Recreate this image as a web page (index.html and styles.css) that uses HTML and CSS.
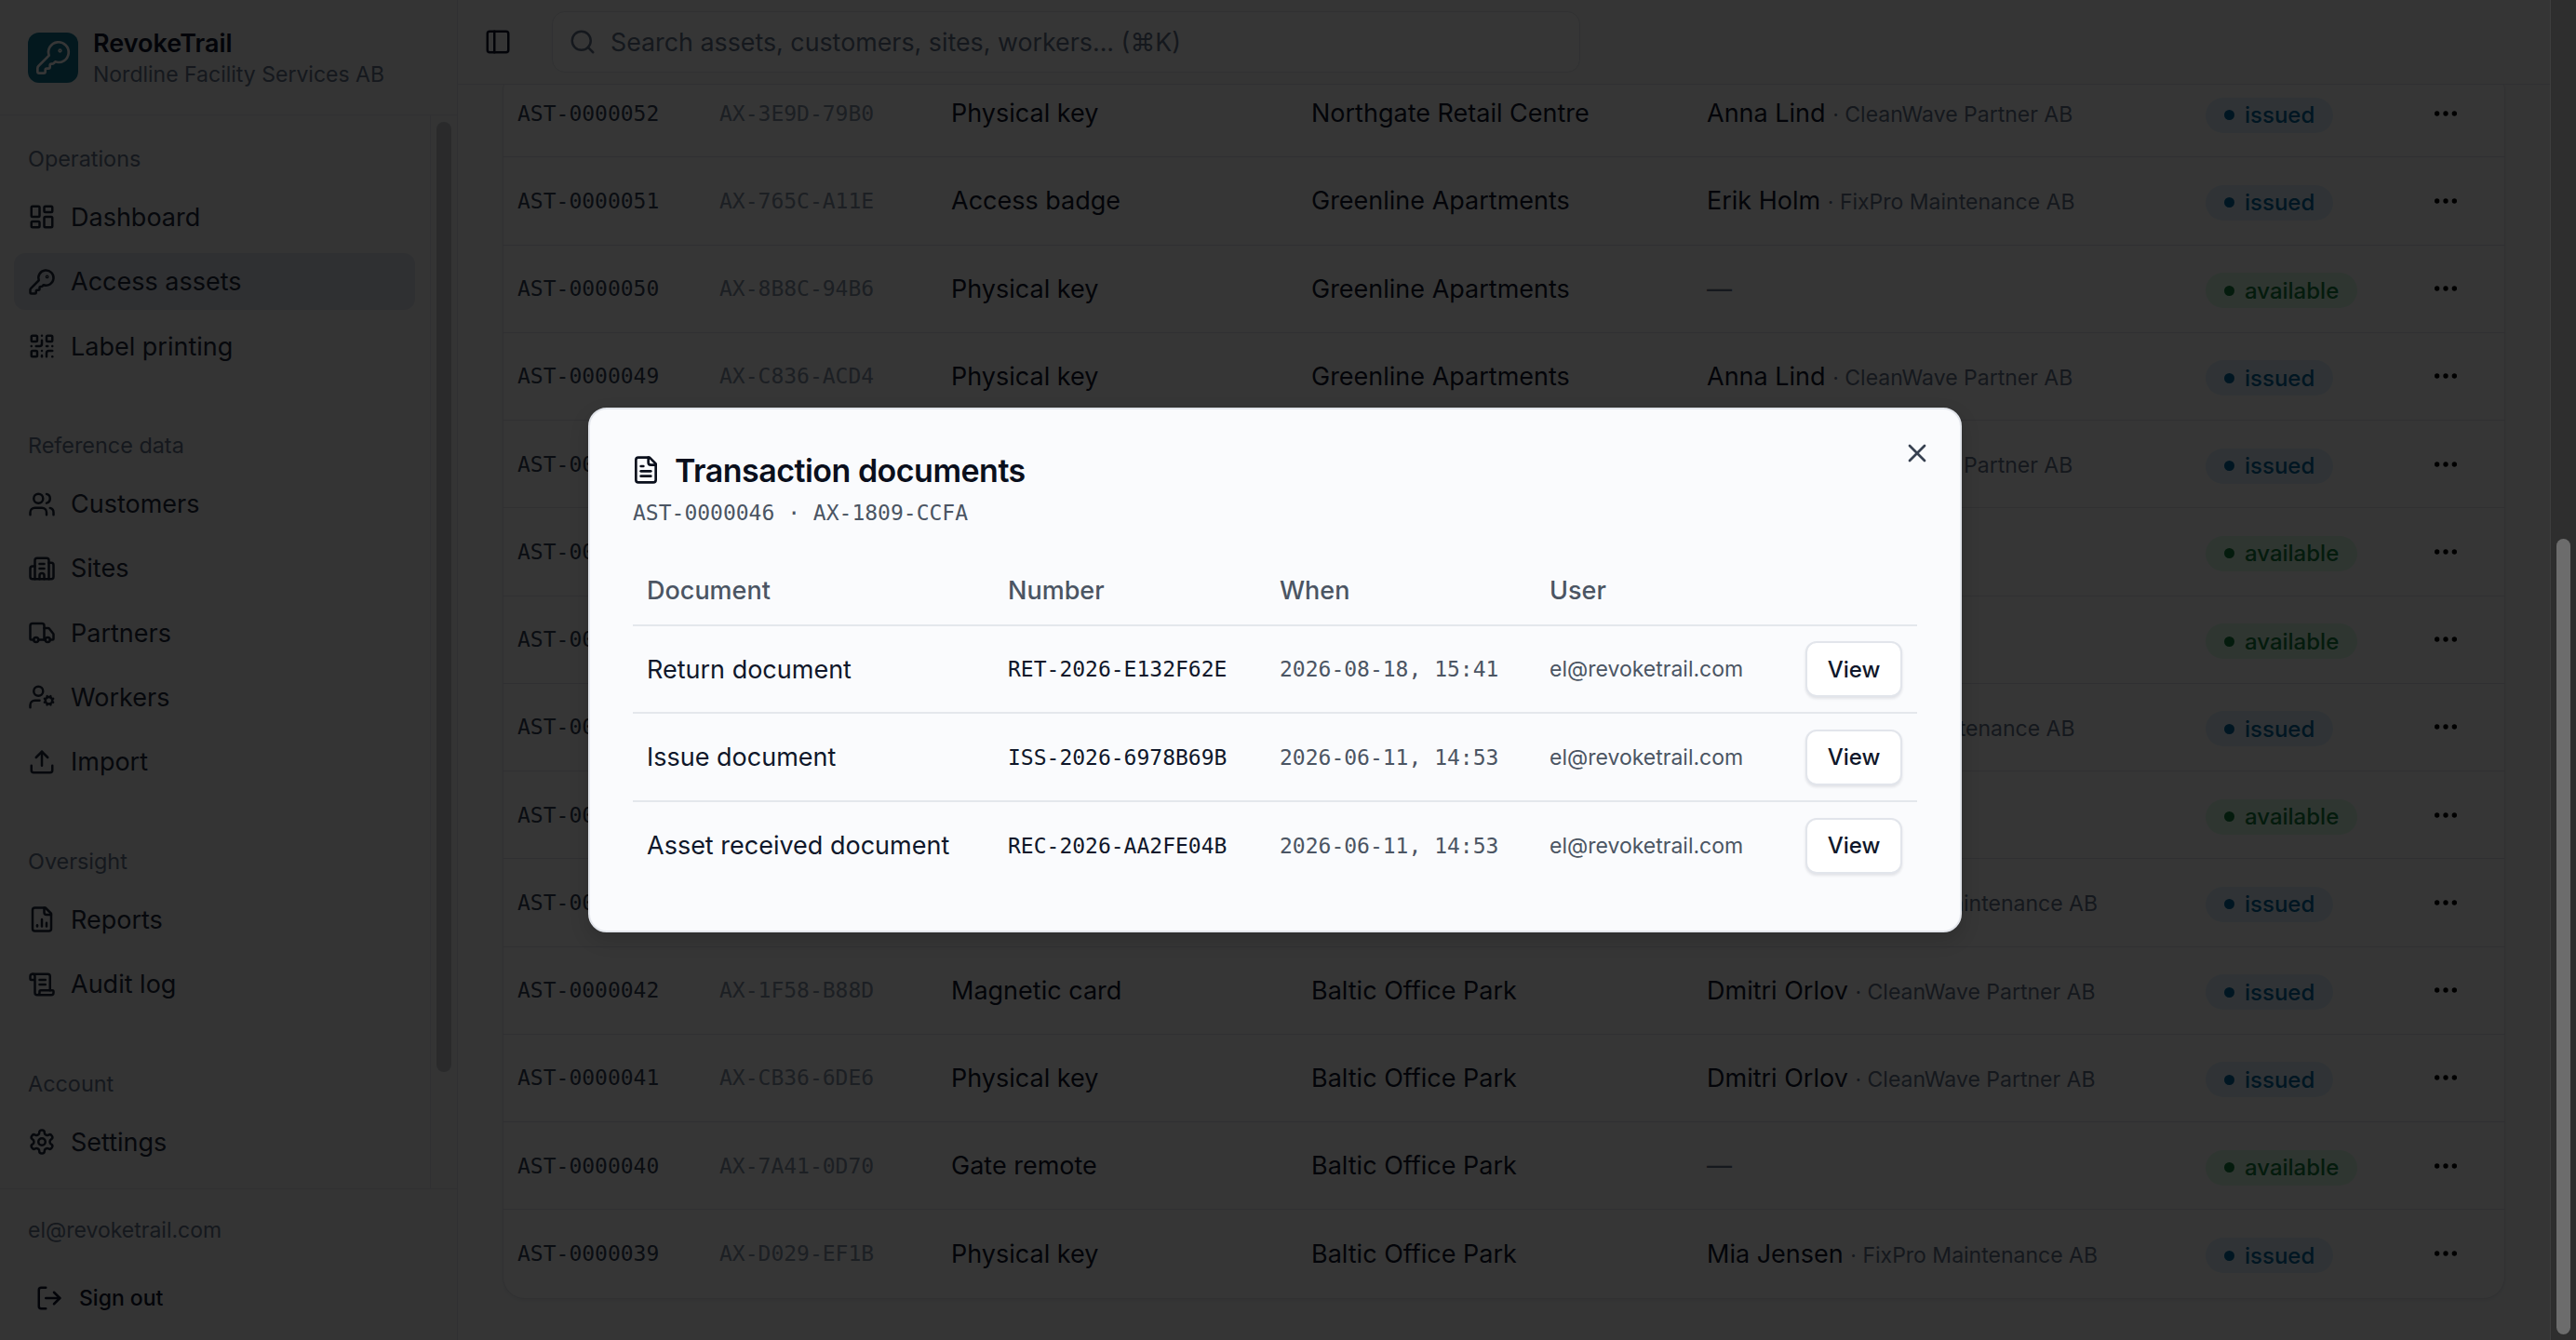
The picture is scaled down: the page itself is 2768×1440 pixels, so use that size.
FILE: index.html
```html
<!DOCTYPE html>
<html lang="en">
<head>
    <meta charset="UTF-8">
    <meta name="viewport" content="width=device-width, initial-scale=1.0">
    <title>RevokeTrail - Access assets</title>
    <link rel="stylesheet" href="styles.css">
</head>
<body>
    <!-- lucide style icons, used through <use> below -->
    <svg class="icon-defs" aria-hidden="true">
        <symbol id="i-key" viewBox="0 0 24 24"><path d="M2.586 17.414A2 2 0 0 0 2 18.828V21a1 1 0 0 0 1 1h3a1 1 0 0 0 1-1v-1a1 1 0 0 1 1-1h1a1 1 0 0 0 1-1v-1a1 1 0 0 1 1-1h.172a2 2 0 0 0 1.414-.586l.814-.814a6.5 6.5 0 1 0-4-4z"/><circle cx="16.5" cy="7.5" r=".5"/></symbol>
        <symbol id="i-dashboard" viewBox="0 0 24 24"><rect width="7" height="9" x="3" y="3" rx="1"/><rect width="7" height="5" x="14" y="3" rx="1"/><rect width="7" height="9" x="14" y="12" rx="1"/><rect width="7" height="5" x="3" y="16" rx="1"/></symbol>
        <symbol id="i-qr" viewBox="0 0 24 24"><rect width="5" height="5" x="3" y="3" rx="1"/><rect width="5" height="5" x="16" y="3" rx="1"/><rect width="5" height="5" x="3" y="16" rx="1"/><path d="M21 16h-3a2 2 0 0 0-2 2v3"/><path d="M21 21v.01"/><path d="M12 7v3a2 2 0 0 1-2 2H7"/><path d="M3 12h.01"/><path d="M12 3h.01"/><path d="M12 16v.01"/><path d="M16 12h1"/><path d="M21 12v.01"/><path d="M12 21v-1"/></symbol>
        <symbol id="i-users" viewBox="0 0 24 24"><path d="M16 21v-2a4 4 0 0 0-4-4H6a4 4 0 0 0-4 4v2"/><circle cx="9" cy="7" r="4"/><path d="M22 21v-2a4 4 0 0 0-3-3.87"/><path d="M16 3.13a4 4 0 0 1 0 7.75"/></symbol>
        <symbol id="i-building" viewBox="0 0 24 24"><path d="M10 12h4"/><path d="M10 8h4"/><path d="M14 21v-3a2 2 0 0 0-4 0v3"/><path d="M6 10H4a2 2 0 0 0-2 2v7a2 2 0 0 0 2 2h16a2 2 0 0 0 2-2V9a2 2 0 0 0-2-2h-2"/><path d="M6 21V5a2 2 0 0 1 2-2h8a2 2 0 0 1 2 2v16"/></symbol>
        <symbol id="i-truck" viewBox="0 0 24 24"><path d="M14 18V6a2 2 0 0 0-2-2H4a2 2 0 0 0-2 2v11a1 1 0 0 0 1 1h2"/><path d="M15 18H9"/><path d="M19 18h2a1 1 0 0 0 1-1v-3.65a1 1 0 0 0-.22-.624l-3.48-4.35A1 1 0 0 0 17.52 8H14"/><circle cx="17" cy="18" r="2"/><circle cx="7" cy="18" r="2"/></symbol>
        <symbol id="i-user-cog" viewBox="0 0 24 24"><path d="M10 15H6a4 4 0 0 0-4 4v2"/><path d="m14.305 16.53.923-.382"/><path d="m15.228 13.852-.923-.383"/><path d="m16.852 12.228-.383-.924"/><path d="m16.852 17.772-.383.924"/><path d="m19.148 12.228.383-.924"/><path d="m19.53 18.696-.382-.924"/><path d="m20.772 13.852.924-.383"/><path d="m20.772 16.148.924.383"/><circle cx="18" cy="15" r="3"/><circle cx="9" cy="7" r="4"/></symbol>
        <symbol id="i-upload" viewBox="0 0 24 24"><path d="M21 15v4a2 2 0 0 1-2 2H5a2 2 0 0 1-2-2v-4"/><polyline points="17 8 12 3 7 8"/><line x1="12" x2="12" y1="3" y2="15"/></symbol>
        <symbol id="i-report" viewBox="0 0 24 24"><path d="M15 2H6a2 2 0 0 0-2 2v16a2 2 0 0 0 2 2h12a2 2 0 0 0 2-2V7Z"/><path d="M14 2v4a2 2 0 0 0 2 2h4"/><path d="M8 18v-1"/><path d="M12 18v-6"/><path d="M16 18v-3"/></symbol>
        <symbol id="i-scroll" viewBox="0 0 24 24"><path d="M15 12h-5"/><path d="M15 8h-5"/><path d="M19 17V5a2 2 0 0 0-2-2H4"/><path d="M8 21h12a2 2 0 0 0 2-2v-1a1 1 0 0 0-1-1H11a1 1 0 0 0-1 1v1a2 2 0 1 1-4 0V5a2 2 0 1 0-4 0v2a1 1 0 0 0 1 1h3"/></symbol>
        <symbol id="i-settings" viewBox="0 0 24 24"><path d="M12.22 2h-.44a2 2 0 0 0-2 2v.18a2 2 0 0 1-1 1.73l-.43.25a2 2 0 0 1-2 0l-.15-.08a2 2 0 0 0-2.73.73l-.22.38a2 2 0 0 0 .73 2.73l.15.1a2 2 0 0 1 1 1.72v.51a2 2 0 0 1-1 1.74l-.15.09a2 2 0 0 0-.73 2.73l.22.38a2 2 0 0 0 2.73.73l.15-.08a2 2 0 0 1 2 0l.43.25a2 2 0 0 1 1 1.73V20a2 2 0 0 0 2 2h.44a2 2 0 0 0 2-2v-.18a2 2 0 0 1 1-1.73l.43-.25a2 2 0 0 1 2 0l.15.08a2 2 0 0 0 2.73-.73l.22-.39a2 2 0 0 0-.73-2.73l-.15-.08a2 2 0 0 1-1-1.74v-.5a2 2 0 0 1 1-1.74l.15-.09a2 2 0 0 0 .73-2.73l-.22-.38a2 2 0 0 0-2.73-.73l-.15.08a2 2 0 0 1-2 0l-.43-.25a2 2 0 0 1-1-1.73V4a2 2 0 0 0-2-2z"/><circle cx="12" cy="12" r="3"/></symbol>
        <symbol id="i-logout" viewBox="0 0 24 24"><path d="M9 21H5a2 2 0 0 1-2-2V5a2 2 0 0 1 2-2h4"/><polyline points="16 17 21 12 16 7"/><line x1="21" x2="9" y1="12" y2="12"/></symbol>
        <symbol id="i-panel" viewBox="0 0 24 24"><rect width="18" height="18" x="3" y="3" rx="2"/><path d="M9 3v18"/></symbol>
        <symbol id="i-search" viewBox="0 0 24 24"><circle cx="11" cy="11" r="8"/><path d="m21 21-4.3-4.3"/></symbol>
        <symbol id="i-dots" viewBox="0 0 24 24"><circle cx="12" cy="12" r="1"/><circle cx="19" cy="12" r="1"/><circle cx="5" cy="12" r="1"/></symbol>
        <symbol id="i-file" viewBox="0 0 24 24"><path d="M15 2H6a2 2 0 0 0-2 2v16a2 2 0 0 0 2 2h12a2 2 0 0 0 2-2V7Z"/><path d="M14 2v4a2 2 0 0 0 2 2h4"/><path d="M10 9H8"/><path d="M16 13H8"/><path d="M16 17H8"/></symbol>
        <symbol id="i-x" viewBox="0 0 24 24"><path d="M18 6 6 18"/><path d="m6 6 12 12"/></symbol>
    </svg>

    <div class="app">
        <aside class="sidebar">
            <div class="brand">
                <div class="brand-logo"><svg class="icon"><use href="#i-key"/></svg></div>
                <div class="brand-text">
                    <div class="brand-name">RevokeTrail</div>
                    <div class="brand-org">Nordline Facility Services AB</div>
                </div>
            </div>

            <div class="side-scroll">
                <nav class="nav">
                    <div class="nav-section">
                        <div class="nav-label">Operations</div>
                        <a class="nav-item"><svg class="icon"><use href="#i-dashboard"/></svg>Dashboard</a>
                        <a class="nav-item active"><svg class="icon"><use href="#i-key"/></svg>Access assets</a>
                        <a class="nav-item"><svg class="icon"><use href="#i-qr"/></svg>Label printing</a>
                    </div>
                    <div class="nav-section">
                        <div class="nav-label">Reference data</div>
                        <a class="nav-item"><svg class="icon"><use href="#i-users"/></svg>Customers</a>
                        <a class="nav-item"><svg class="icon"><use href="#i-building"/></svg>Sites</a>
                        <a class="nav-item"><svg class="icon"><use href="#i-truck"/></svg>Partners</a>
                        <a class="nav-item"><svg class="icon"><use href="#i-user-cog"/></svg>Workers</a>
                        <a class="nav-item"><svg class="icon"><use href="#i-upload"/></svg>Import</a>
                    </div>
                    <div class="nav-section">
                        <div class="nav-label">Oversight</div>
                        <a class="nav-item"><svg class="icon"><use href="#i-report"/></svg>Reports</a>
                        <a class="nav-item"><svg class="icon"><use href="#i-scroll"/></svg>Audit log</a>
                    </div>
                    <div class="nav-section">
                        <div class="nav-label">Account</div>
                        <a class="nav-item"><svg class="icon"><use href="#i-settings"/></svg>Settings</a>
                    </div>
                </nav>
                <div class="side-track"><div class="side-thumb"></div></div>
            </div>

            <div class="side-foot">
                <div class="side-email">el@revoketrail.com</div>
                <a class="sign-out"><svg class="icon"><use href="#i-logout"/></svg>Sign out</a>
            </div>
        </aside>

        <main class="main">
            <header class="topbar">
                <svg class="icon panel-toggle"><use href="#i-panel"/></svg>
                <div class="search">
                    <svg class="icon"><use href="#i-search"/></svg>
                    <span>Search assets, customers, sites, workers... (⌘K)</span>
                </div>
            </header>

            <div class="card">
                <div class="row">
                    <span class="mono code">AST-0000052</span><span class="mono faint">AX-3E9D-79B0</span><span>Physical key</span><span>Northgate Retail Centre</span>
                    <span><span class="holder">Anna Lind</span> <span class="org">· CleanWave Partner AB</span></span>
                    <span><span class="badge issued"><i></i>issued</span></span><svg class="icon dots"><use href="#i-dots"/></svg>
                </div>
                <div class="row">
                    <span class="mono code">AST-0000051</span><span class="mono faint">AX-765C-A11E</span><span>Access badge</span><span>Greenline Apartments</span>
                    <span><span class="holder">Erik Holm</span> <span class="org">· FixPro Maintenance AB</span></span>
                    <span><span class="badge issued"><i></i>issued</span></span><svg class="icon dots"><use href="#i-dots"/></svg>
                </div>
                <div class="row">
                    <span class="mono code">AST-0000050</span><span class="mono faint">AX-8B8C-94B6</span><span>Physical key</span><span>Greenline Apartments</span>
                    <span class="none">—</span>
                    <span><span class="badge available"><i></i>available</span></span><svg class="icon dots"><use href="#i-dots"/></svg>
                </div>
                <div class="row">
                    <span class="mono code">AST-0000049</span><span class="mono faint">AX-C836-ACD4</span><span>Physical key</span><span>Greenline Apartments</span>
                    <span><span class="holder">Anna Lind</span> <span class="org">· CleanWave Partner AB</span></span>
                    <span><span class="badge issued"><i></i>issued</span></span><svg class="icon dots"><use href="#i-dots"/></svg>
                </div>
                <div class="row">
                    <span class="mono code">AST-0000048</span><span class="mono faint">AX-51D2-07AE</span><span>Physical key</span><span>Greenline Apartments</span>
                    <span><span class="holder">Anna Lind</span> <span class="org">· CleanWave Partner AB</span></span>
                    <span><span class="badge issued"><i></i>issued</span></span><svg class="icon dots"><use href="#i-dots"/></svg>
                </div>
                <div class="row">
                    <span class="mono code">AST-0000047</span><span class="mono faint">AX-2C74-E90B</span><span>Gate remote</span><span>Greenline Apartments</span>
                    <span class="none">—</span>
                    <span><span class="badge available"><i></i>available</span></span><svg class="icon dots"><use href="#i-dots"/></svg>
                </div>
                <div class="row">
                    <span class="mono code">AST-0000046</span><span class="mono faint">AX-1809-CCFA</span><span>Physical key</span><span>Baltic Office Park</span>
                    <span class="none">—</span>
                    <span><span class="badge available"><i></i>available</span></span><svg class="icon dots"><use href="#i-dots"/></svg>
                </div>
                <div class="row">
                    <span class="mono code">AST-0000045</span><span class="mono faint">AX-6FA3-12C8</span><span>Access badge</span><span>Baltic Office Park</span>
                    <span><span class="holder">Erik Holm</span> <span class="org">· FixPro Maintenance AB</span></span>
                    <span><span class="badge issued"><i></i>issued</span></span><svg class="icon dots"><use href="#i-dots"/></svg>
                </div>
                <div class="row">
                    <span class="mono code">AST-0000044</span><span class="mono faint">AX-93BE-40D1</span><span>Magnetic card</span><span>Baltic Office Park</span>
                    <span class="none">—</span>
                    <span><span class="badge available"><i></i>available</span></span><svg class="icon dots"><use href="#i-dots"/></svg>
                </div>
                <div class="row">
                    <span class="mono code">AST-0000043</span><span class="mono faint">AX-E027-5B6C</span><span>Physical key</span><span>Baltic Office Park</span>
                    <span><span class="holder">Mia Jensen</span> <span class="org">· FixPro Maintenance AB</span></span>
                    <span><span class="badge issued"><i></i>issued</span></span><svg class="icon dots"><use href="#i-dots"/></svg>
                </div>
                <div class="row">
                    <span class="mono code">AST-0000042</span><span class="mono faint">AX-1F58-B88D</span><span>Magnetic card</span><span>Baltic Office Park</span>
                    <span><span class="holder">Dmitri Orlov</span> <span class="org">· CleanWave Partner AB</span></span>
                    <span><span class="badge issued"><i></i>issued</span></span><svg class="icon dots"><use href="#i-dots"/></svg>
                </div>
                <div class="row">
                    <span class="mono code">AST-0000041</span><span class="mono faint">AX-CB36-6DE6</span><span>Physical key</span><span>Baltic Office Park</span>
                    <span><span class="holder">Dmitri Orlov</span> <span class="org">· CleanWave Partner AB</span></span>
                    <span><span class="badge issued"><i></i>issued</span></span><svg class="icon dots"><use href="#i-dots"/></svg>
                </div>
                <div class="row">
                    <span class="mono code">AST-0000040</span><span class="mono faint">AX-7A41-0D70</span><span>Gate remote</span><span>Baltic Office Park</span>
                    <span class="none">—</span>
                    <span><span class="badge available"><i></i>available</span></span><svg class="icon dots"><use href="#i-dots"/></svg>
                </div>
                <div class="row">
                    <span class="mono code">AST-0000039</span><span class="mono faint">AX-D029-EF1B</span><span>Physical key</span><span>Baltic Office Park</span>
                    <span><span class="holder">Mia Jensen</span> <span class="org">· FixPro Maintenance AB</span></span>
                    <span><span class="badge issued"><i></i>issued</span></span><svg class="icon dots"><use href="#i-dots"/></svg>
                </div>
            </div>
        </main>

        <!-- dialog and its backdrop -->
        <div class="backdrop">
            <div class="modal">
                <svg class="icon modal-close"><use href="#i-x"/></svg>
                <h2 class="modal-title"><svg class="icon"><use href="#i-file"/></svg>Transaction documents</h2>
                <div class="mono modal-sub">AST-0000046 · AX-1809-CCFA</div>

                <div class="doc-head">
                    <span>Document</span><span>Number</span><span>When</span><span>User</span>
                </div>
                <div class="doc-row">
                    <span>Return document</span><span class="mono">RET-2026-E132F62E</span><span class="mono doc-when">2026-08-18, 15:41</span><span class="doc-user">el@revoketrail.com</span><button class="view-btn">View</button>
                </div>
                <div class="doc-row">
                    <span>Issue document</span><span class="mono">ISS-2026-6978B69B</span><span class="mono doc-when">2026-06-11, 14:53</span><span class="doc-user">el@revoketrail.com</span><button class="view-btn">View</button>
                </div>
                <div class="doc-row">
                    <span>Asset received document</span><span class="mono">REC-2026-AA2FE04B</span><span class="mono doc-when">2026-06-11, 14:53</span><span class="doc-user">el@revoketrail.com</span><button class="view-btn">View</button>
                </div>
            </div>
        </div>
    </div>

    <div class="page-track"><div class="page-thumb"></div></div>
</body>
</html>
```

FILE: styles.css
```css
* {
    box-sizing: border-box;
}
html, body {
    height: 100%;
}
body {
    margin: 0;
    display: flex;
    overflow: hidden;
    font-family: Inter, "Noto Sans", sans-serif;
    font-size: 27px;
    color: #0f172a;
    background: #f9fafb;
}
.icon-defs {
    display: none;
}
.icon {
    width: 30px;
    height: 30px;
    flex: none;
    fill: none;
    stroke: currentColor;
    stroke-width: 2;
    stroke-linecap: round;
    stroke-linejoin: round;
}
.mono {
    font-family: "DejaVu Sans Mono", "Liberation Mono", monospace;
    font-size: 23px;
}

.app {
    flex: 1;
    display: flex;
    min-width: 0;
    position: relative;
}

/* sidebar */
.sidebar {
    width: 492px;
    flex: none;
    display: flex;
    flex-direction: column;
    background: #f3f4f6;
    border-right: 1px solid #e2e4e9;
}
.brand {
    height: 124px;
    flex: none;
    display: flex;
    align-items: center;
    gap: 16px;
    padding: 0 30px;
    border-bottom: 1px solid #e2e4e9;
}
.brand-logo {
    width: 54px;
    height: 54px;
    border-radius: 12px;
    background: #0e7490;
    color: #fff;
    display: flex;
    align-items: center;
    justify-content: center;
}
.brand-logo .icon {
    width: 40px;
    height: 40px;
    stroke-width: 1.6;
}
.brand-text {
    margin-top: 2px;
}
.brand-name {
    font-size: 27px;
    font-weight: 600;
    line-height: 34px;
}
.brand-org {
    font-size: 23px;
    line-height: 32px;
    color: #64748b;
}
.side-scroll {
    flex: 1;
    min-height: 0;
    display: flex;
}
.nav {
    flex: 1;
    padding: 29px 16px 0 15px;
    overflow: hidden;
}
.nav-section {
    display: flex;
    flex-direction: column;
    gap: 8.3px;
    margin-bottom: 58.5px;
}
.nav-label {
    height: 36px;
    line-height: 36px;
    margin-bottom: 5.7px;
    padding-left: 15px;
    font-size: 23.4px;
    color: #64748b;
}
.nav-item {
    height: 61px;
    display: flex;
    align-items: center;
    gap: 16px;
    padding-left: 15px;
    border-radius: 12px;
    font-size: 27px;
    color: #1e293b;
}
.nav-item.active {
    background: #dfe3ea;
}
.side-track {
    width: 29px;
    flex: none;
    padding: 7px 6px 0 6px;
    border-left: 1px solid #e2e4e9;
}
.side-thumb {
    height: 1021px;
    border-radius: 8px;
    background: #c4c7cc;
}
.side-foot {
    height: 163px;
    flex: none;
    padding: 26px 30px 0;
    border-top: 1px solid #e2e4e9;
}
.side-email {
    height: 36px;
    line-height: 36px;
    font-size: 23px;
    color: #64748b;
}
.sign-out {
    display: flex;
    align-items: center;
    gap: 17px;
    margin-top: 40px;
    padding-left: 8px;
    font-size: 23px;
    font-weight: 500;
}

/* main column */
.main {
    flex: 1;
    min-width: 0;
    padding: 0 48px;
    overflow: hidden;
}
.topbar {
    position: relative;
    z-index: 1;
    height: 91px;
    margin: 0 -48px;
    padding-left: 28px;
    display: flex;
    align-items: center;
    gap: 43px;
    background: #f9fafb;
    border-bottom: 1px solid #e2e4e9;
}
.panel-toggle {
    margin-top: -1px;
}
.search {
    width: 1105px;
    height: 66px;
    padding-left: 17px;
    display: flex;
    align-items: center;
    gap: 15px;
    border: 1px solid #e2e4e9;
    border-radius: 14px;
    background: #fff;
    font-size: 26.8px;
    color: #64748b;
}
.card {
    margin-top: -17px;
    background: #fff;
    border: 1px solid #e2e4e9;
    border-radius: 24px;
    box-shadow: 0 2px 4px rgba(15, 23, 42, .06);
}
.row {
    height: 94.25px;
    padding-left: 15px;
    display: grid;
    grid-template-columns: 217px 249px 387px 425px 536px 242px 1fr;
    align-items: center;
    border-bottom: 1px solid #e2e4e9;
}
.row:last-child {
    border-bottom: none;
}
.code {
    color: #334155;
}
.faint {
    color: #8492a6;
}
.org {
    font-size: 23px;
    color: #64748b;
}
.none {
    color: #64748b;
}
.badge {
    display: inline-flex;
    align-items: center;
    gap: 11px;
    height: 38px;
    margin-top: 4px;
    padding: 0 20px;
    border-radius: 19px;
    font-size: 24px;
    font-weight: 500;
    vertical-align: middle;
}
.badge i {
    width: 11px;
    height: 11px;
    border-radius: 50%;
    background: currentColor;
}
.issued {
    background: #e0f2fe;
    color: #0369a1;
}
.available {
    background: #dcfce7;
    color: #15803d;
}
.dots {
    width: 32px;
    height: 32px;
    color: #000;
    fill: currentColor;
}

/* dialog */
.backdrop {
    position: absolute;
    inset: 0;
    z-index: 10;
    display: flex;
    align-items: center;
    justify-content: center;
    background: rgba(0, 0, 0, .79);
}
.modal {
    position: relative;
    width: 1476px;
    padding: 46px 46px 44px;
    background: #fafbfd;
    border: 2px solid #e2e5eb;
    border-radius: 20px;
    box-shadow: 0 8px 20px rgba(0, 0, 0, .15);
}
.modal-close {
    position: absolute;
    top: 31px;
    right: 30px;
    width: 32px;
    height: 32px;
    color: #374151;
}
.modal-title {
    margin: 0;
    display: flex;
    align-items: center;
    gap: 15px;
    height: 38px;
    font-size: 34px;
    font-weight: 600;
    letter-spacing: -.015em;
    color: #0a0f1c;
}
.modal-title .icon {
    width: 32px;
    height: 32px;
    margin-left: -2px;
}
.modal-sub {
    margin-top: 9px;
    height: 36px;
    line-height: 36px;
    color: #4b5563;
}
.doc-head, .doc-row {
    display: grid;
    grid-template-columns: 388px 292px 290px 1fr auto;
    align-items: center;
    padding: 0 16px 0 15px;
}
.doc-head {
    height: 76px;
    margin-top: 28px;
    font-weight: 500;
    color: #4b5563;
    border-bottom: 2px solid #e4e7ec;
}
.doc-row {
    height: 94.2px;
    border-bottom: 2px solid #e4e7ec;
}
.doc-row:last-child {
    border-bottom: none;
}
.doc-when, .doc-user {
    color: #4b5563;
}
.doc-user {
    font-size: 23px;
}
.view-btn {
    width: 104px;
    height: 60px;
    font-family: inherit;
    font-size: 24px;
    font-weight: 500;
    color: #0f172a;
    background: #fff;
    border: 2px solid #e2e5eb;
    border-radius: 12px;
    box-shadow: 0 2px 3px rgba(15, 23, 42, .1);
}

/* window scrollbar, sits above the backdrop */
.page-track {
    width: 28px;
    flex: none;
    padding: 579px 6px 6px 6px;
    background: #2e2e2e;
    border-left: 1px solid #3d3d3d;
}
.page-thumb {
    height: 100%;
    border-radius: 8px;
    background: #6c6c6c;
}
```
